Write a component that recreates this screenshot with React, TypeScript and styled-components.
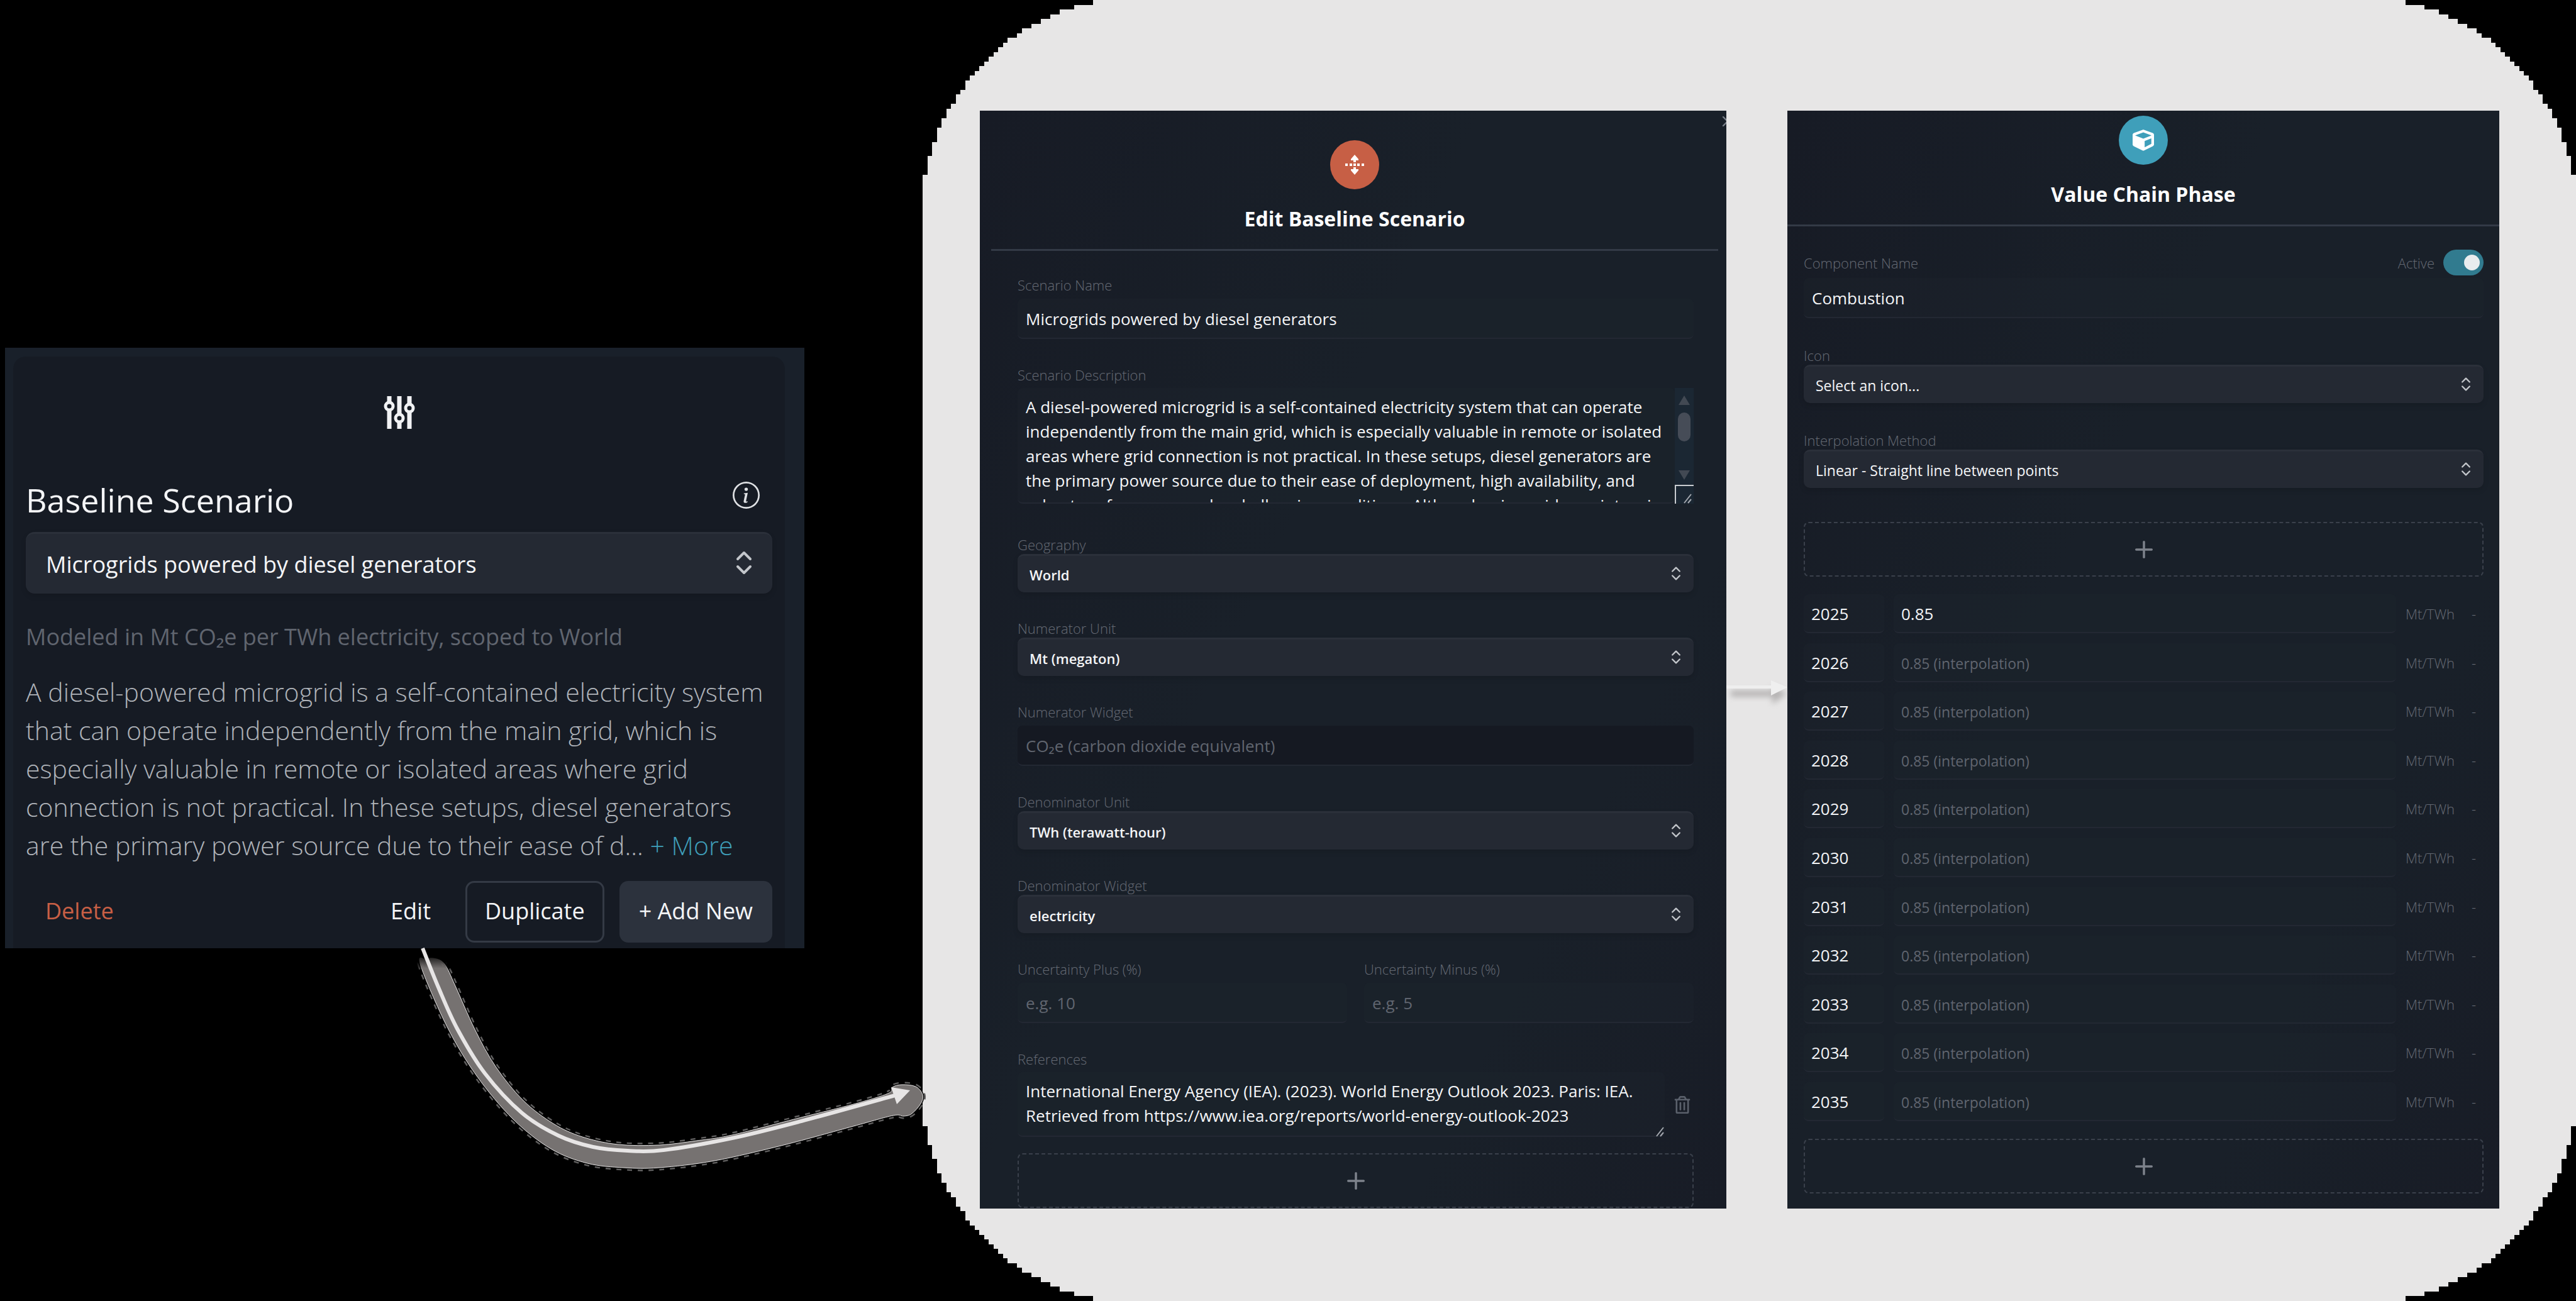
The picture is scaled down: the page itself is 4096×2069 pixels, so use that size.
import React from 'react';
import styled, { createGlobalStyle, css } from 'styled-components';
import { ChevronsUpDown, Plus, X } from 'lucide-react';
import { FaCube, FaRegTrashAlt } from 'react-icons/fa';
import { BsInfoCircle } from 'react-icons/bs';

const colors = {
  backdrop: '#000000',
  stage: '#e7e6e6',
  card: '#19202a',
  cardInner: '#161b24',
  select: '#242933',
  selectEdge: '#2b303a',
  line: '#232833',
  divider: '#333a46',
  text: '#f4f5f7',
  soft: '#afb3b9',
  muted: '#60656f',
  label: '#656a74',
  teal: '#3f9fba',
  orange: '#c75f45',
};

const GlobalStyle = createGlobalStyle`
  *, *::before, *::after { box-sizing: border-box; }
  body {
    margin: 0;
    background: ${colors.backdrop};
    color: ${colors.text};
    font-family: "Open Sans", "Noto Sans", sans-serif;
    font-size: 26px;
  }
  h1, h2, p, ul { margin: 0; padding: 0; }
  ul { list-style: none; }
  button, input, select, textarea { font: inherit; color: inherit; }
  button { background: none; border: 0; padding: 0; cursor: pointer; }
`;

/* The light stage has stair-stepped corners: each entry is the column at which a row of steps begins. */
const STEP = 752;
const cornerColumns = [
  36, 32, 29, 27, 25, 23, 21, 20, 18, 17, 16, 15, 14, 13, 12, 11, 10, 9, 9, 8, 7, 7, 6, 5, 5, 4, 4, 3,
  3, 3, 2, 2, 2, 1, 1, 1, 1, 0,
];
const unit = (n: number) => Math.round((n * STEP) / 100);

function steppedCorners() {
  const steps: [number, number][] = [];
  cornerColumns.forEach((column, row) => {
    steps.push([unit(column), unit(row)]);
    if (row < cornerColumns.length - 1) steps.push([unit(column), unit(row + 1)]);
  });
  const back = [...steps].reverse();
  const points = [
    ...back.map(([x, y]) => `${x}px ${y}px`),
    ...steps.map(([x, y]) => `calc(100% - ${x}px) ${y}px`),
    ...back.map(([x, y]) => `calc(100% - ${x}px) calc(100% - ${y}px)`),
    ...steps.map(([x, y]) => `${x}px calc(100% - ${y}px)`),
  ];
  return `polygon(${points.join(', ')})`;
}

const Page = styled.main`
  position: relative;
  display: grid;
  grid-template-columns: 1271fr 2629fr;
  column-gap: 188px;
  min-height: 100vh;
  padding-left: 8px;
`;

const Aside = styled.section`
  display: flex;
  align-items: center;
  padding-bottom: 8px;
`;

const Card = styled.div`
  flex: 1;
  min-width: 0;
  padding: 14px 31px 0 13px;
  background: ${colors.card};
`;

const CardInner = styled.div`
  display: flex;
  flex-direction: column;
  padding: 63px 20px 9px;
  border-radius: 20px 20px 0 0;
  background: ${colors.cardInner};
`;

const SlidersIcon = styled.svg`
  align-self: center;
  width: 50px;
  height: 52px;
`;

const CardHeader = styled.header`
  display: flex;
  justify-content: space-between;
  align-items: flex-start;
  margin: 78px 0 16px;
`;

const CardTitle = styled.h1`
  font-size: 52px;
  line-height: 70px;
  font-weight: 400;
`;

const InfoButton = styled.button`
  display: flex;
  margin: 6px 20px 0 0;
  font-size: 43px;
  color: #dfe1e4;
`;

const Scope = styled.p`
  margin-top: 42px;
  font-size: 36px;
  line-height: 54px;
  color: ${colors.muted};
`;

const Summary = styled.p`
  margin: 30px 0 26px;
  font-size: 41px;
  line-height: 61px;
  font-weight: 300;
  color: ${colors.soft};
`;

const MoreLink = styled.a`
  color: ${colors.teal};
  text-decoration: none;
`;

const Actions = styled.div`
  display: flex;
  gap: 24px;
`;

type ActionKind = 'danger' | 'plain' | 'outline' | 'solid';
const actionLook = {
  danger: css`
    margin-right: auto;
    color: ${colors.orange};
  `,
  plain: css``,
  outline: css`
    border: 3px solid #343a45;
  `,
  solid: css`
    background: #2c323d;
  `,
};
const Action = styled.button<{ $kind: ActionKind }>`
  height: 98px;
  padding: 0 28px 4px;
  border: 3px solid transparent;
  border-radius: 14px;
  font-size: 36px;
  ${(p) => actionLook[p.$kind]}
`;

const Stage = styled.section`
  display: grid;
  grid-template-columns: 1187fr 1132fr;
  column-gap: 97px;
  padding: 176px 122px 147px 91px;
  background: ${colors.stage};
  clip-path: ${steppedCorners()};
`;

const Panel = styled.article`
  position: relative;
  display: flex;
  flex-direction: column;
  min-width: 0;
  overflow: hidden;
  background: linear-gradient(115deg, #171b25 0%, #192029 40%, #192029 75%, #181c26 100%);
`;

const PanelHeader = styled.header<{ $top: number; $inset: boolean }>`
  display: flex;
  flex-direction: column;
  align-items: center;
  gap: 23px;
  margin: ${(p) => (p.$inset ? '0 13px 0 18px' : '0')};
  padding: ${(p) => p.$top}px 0 24px;
  border-bottom: 3px solid ${colors.divider};
`;

const Badge = styled.div<{ $color: string }>`
  display: flex;
  align-items: center;
  justify-content: center;
  width: 78px;
  height: 78px;
  border-radius: 50%;
  background: ${(p) => p.$color};
  font-size: 34px;
`;

const SplitIcon = styled.svg`
  width: 34px;
  height: 34px;
  fill: #ffffff;
`;

const PanelTitle = styled.h2`
  font-size: 32px;
  line-height: 48px;
  font-weight: 700;
  color: #ffffff;
`;

const CloseButton = styled.button`
  position: absolute;
  top: 3px;
  right: -16px;
  color: #7a808a;
`;

const ScenarioForm = styled.form`
  display: flex;
  flex-direction: column;
  gap: 42px;
  padding: 39px 52px 0 60px;
`;

const PhaseForm = styled.form`
  display: flex;
  flex: 1;
  flex-direction: column;
  gap: 44px;
  padding: 36px 25px 24px 26px;
`;

const FieldBox = styled.div`
  display: flex;
  flex-direction: column;
  flex: 1;
  min-width: 0;
`;

const Label = styled.label`
  font-size: 22px;
  line-height: 30px;
  font-weight: 300;
  color: ${colors.label};
`;

const SelectWrap = styled.div<{ $large?: boolean; $bold?: boolean }>`
  position: relative;
  display: flex;
  height: ${(p) => (p.$large ? 98 : 61)}px;
  font-size: ${(p) => (p.$large ? 36 : p.$bold ? 22 : 23)}px;
  font-weight: ${(p) => (p.$bold ? 600 : 400)};
  svg {
    position: absolute;
    top: 50%;
    right: ${(p) => (p.$large ? 21 : 14)}px;
    transform: translateY(-50%);
    color: #c3c6cb;
    pointer-events: none;
  }
`;

const Select = styled.select<{ $large?: boolean }>`
  appearance: none;
  width: 100%;
  padding: 1px ${(p) => (p.$large ? 32 : 19)}px 0;
  border: 0;
  border-top: 3px solid ${colors.selectEdge};
  border-radius: ${(p) => (p.$large ? 14 : 10)}px;
  background: ${colors.select};
  box-shadow: 0 4px 8px rgba(0, 0, 0, 0.12);
`;

const inputLook = css`
  width: 100%;
  min-width: 0;
  border: 0;
  border-bottom: 2px solid ${colors.line};
  border-radius: 8px;
  background: rgba(30, 38, 46, 0.25);
  outline: 0;
  &::placeholder {
    color: ${colors.muted};
    opacity: 1;
  }
`;

const Input = styled.input<{ $dark?: boolean }>`
  ${inputLook}
  height: 64px;
  margin-top: 7px;
  padding: 2px 13px 0;
  ${(p) =>
    p.$dark &&
    css`
      background: #151922;
    `}
`;

const TextArea = styled.textarea<{ $height: number }>`
  ${inputLook}
  height: ${(p) => p.$height}px;
  padding: 11px 4px 0 13px;
  line-height: 39px;
  resize: none;
  overflow: hidden;
`;

const AreaRow = styled.div`
  position: relative;
  display: flex;
  align-items: center;
  margin-top: 6px;
`;

const DescriptionField = styled(FieldBox)`
  padding-bottom: 8px;
`;

const ScrollTrack = styled.div`
  display: flex;
  flex: none;
  flex-direction: column;
  align-items: center;
  align-self: stretch;
  width: 30px;
  background: #1b2733;
`;

const ScrollArrow = styled.span<{ $down?: boolean }>`
  width: 18px;
  height: 15px;
  margin: ${(p) => (p.$down ? 'auto 0 8px' : '12px 0')};
  background: #424953;
  clip-path: ${(p) => (p.$down ? 'polygon(0 0, 100% 0, 50% 100%)' : 'polygon(50% 0, 100% 100%, 0 100%)')};
`;

const ScrollThumb = styled.span`
  width: 20px;
  height: 46px;
  border-radius: 10px;
  background: #464c57;
`;

const ResizeCorner = styled.span`
  display: flex;
  width: 30px;
  height: 30px;
  padding: 10px 2px 0 8px;
  border-top: 2px solid #c9ccd0;
  border-left: 2px solid #c9ccd0;
`;

const GripIcon = styled.svg`
  width: 18px;
  height: 18px;
  fill: none;
  stroke: #a5a9b0;
  stroke-width: 2;
`;

const CornerGrip = styled.span`
  position: absolute;
  right: 46px;
  bottom: 0;
  display: flex;
`;

const TrashButton = styled.button`
  display: flex;
  flex: none;
  justify-content: flex-end;
  width: 46px;
  padding-right: 4px;
  font-size: 28px;
  color: #5a606b;
`;

const Pair = styled.div`
  display: flex;
  gap: 27px;
`;

const ReferenceGroup = styled.div`
  display: flex;
  flex-direction: column;
  gap: 26px;
`;

const AddButton = styled.button`
  display: flex;
  flex: none;
  align-items: center;
  justify-content: center;
  width: 100%;
  height: 87px;
  border: 2px dashed #3a404b;
  border-radius: 8px;
  color: #7d828b;
`;

const LabelRow = styled.div`
  display: flex;
  align-items: center;
  gap: 14px;
  height: 43px;
  label:first-child {
    margin-right: auto;
  }
`;

const Toggle = styled.input`
  appearance: none;
  display: flex;
  align-items: center;
  justify-content: flex-end;
  width: 64px;
  height: 41px;
  margin: 0;
  padding: 0 6px;
  border-radius: 21px;
  background: #317b8f;
  &::before {
    content: '';
    width: 25px;
    height: 25px;
    border-radius: 50%;
    background: #e9ecee;
  }
`;

const NameField = styled(FieldBox)`
  flex: none;
  input[type='text'] {
    margin-top: 3px;
  }
`;

const PlainField = styled(FieldBox)`
  flex: none;
`;

const Timeline = styled.div`
  display: flex;
  flex: 1;
  flex-direction: column;
  gap: 28px;
  padding-top: 10px;
`;

const YearList = styled.ul`
  display: flex;
  flex: 1;
  flex-direction: column;
  justify-content: space-between;
`;

const YearRow = styled.li`
  display: grid;
  grid-template-columns: 128px 1fr 80px 44px;
  column-gap: 15px;
  align-items: center;
  margin-right: -15px;
`;

const YearInput = styled.input`
  ${inputLook}
  height: 62px;
  padding: 2px 12px 0;
`;

const ValueInput = styled(YearInput)`
  &::placeholder {
    font-size: 23px;
  }
`;

const UnitText = styled.span`
  font-size: 22px;
  line-height: 30px;
  font-weight: 300;
  color: ${colors.label};
`;

const DashText = styled(UnitText)`
  padding-left: 10px;
`;

const Connectors = styled.svg`
  position: absolute;
  inset: 0;
  width: 100%;
  height: 100%;
  pointer-events: none;
`;

type Point = [number, number];

/* Smooth curve through the points, as cubic segments. */
function curve(points: Point[], closed = false) {
  const n = points.length;
  const at = (i: number) => (closed ? points[(i + n) % n] : points[Math.max(0, Math.min(n - 1, i))]);
  let d = `M${points[0][0]} ${points[0][1]}`;
  for (let i = 0; i < (closed ? n : n - 1); i += 1) {
    const [a, b, c, e] = [at(i - 1), at(i), at(i + 1), at(i + 2)];
    d += ` C${b[0] + (c[0] - a[0]) / 6} ${b[1] + (c[1] - a[1]) / 6} ${c[0] - (e[0] - b[0]) / 6} ${
      c[1] - (e[1] - b[1]) / 6
    } ${c[0]} ${c[1]}`;
  }
  return closed ? `${d}Z` : d;
}

const swoosh: Point[] = [
  [672, 1508], [697, 1570], [727, 1636], [771, 1707], [830, 1770], [888, 1806], [943, 1824], [998, 1830],
  [1055, 1829], [1164, 1810], [1274, 1783], [1423, 1742],
];
const band: Point[] = [
  [668, 1533], [711, 1633], [758, 1711], [816, 1780], [876, 1827], [934, 1850], [992, 1857], [1048, 1857],
  [1136, 1846], [1246, 1821], [1357, 1791], [1420, 1774], [1437, 1775], [1450, 1771], [1464, 1755],
  [1467, 1741], [1456, 1728], [1434, 1725], [1419, 1729], [1412, 1739], [1357, 1756], [1274, 1777],
  [1164, 1805], [1108, 1814], [1048, 1821], [982, 1820], [926, 1808], [880, 1787], [832, 1750],
  [788, 1696], [755, 1637], [724, 1568], [707, 1533], [692, 1524], [678, 1525],
];

function ConnectorLayer() {
  return (
    <Connectors viewBox="0 0 4096 2069" preserveAspectRatio="none" aria-hidden="true">
      <defs>
        <linearGradient id="bandFill" gradientUnits="userSpaceOnUse" x1="0" y1="1516" x2="0" y2="1540">
          <stop offset="0" stopColor="#767271" stopOpacity="0" />
          <stop offset="1" stopColor="#767271" />
        </linearGradient>
        <linearGradient id="bandEdge" gradientUnits="userSpaceOnUse" x1="0" y1="1530" x2="0" y2="1544">
          <stop offset="0" stopColor="#e4e2e2" stopOpacity="0" />
          <stop offset="1" stopColor="#e4e2e2" />
        </linearGradient>
        <linearGradient id="bandFringe" gradientUnits="userSpaceOnUse" x1="0" y1="1530" x2="0" y2="1544">
          <stop offset="0" stopColor="#5f5e5e" stopOpacity="0" />
          <stop offset="1" stopColor="#5f5e5e" />
        </linearGradient>
        <filter id="soft" x="-20%" y="-200%" width="140%" height="500%">
          <feGaussianBlur stdDeviation="5" />
        </filter>
      </defs>
      <path d={curve(band, true)} fill="none" stroke="url(#bandFringe)" strokeWidth="9" strokeDasharray="8 9" />
      <path d={curve(band, true)} fill="none" stroke="#000000" strokeWidth="4" />
      <path d={curve(band, true)} fill="url(#bandFill)" stroke="url(#bandEdge)" strokeWidth="1" />
      <path d={curve(swoosh)} fill="none" stroke="#e7e5e5" strokeWidth="6" />
      <path d="M1417 1729L1447 1734L1426 1756Z" fill="#e7e5e5" />
      <g filter="url(#soft)" fill="#9b9999" opacity="0.65">
        <path d="M2752 1098H2818V1090L2841 1103L2818 1120V1108H2752Z" />
      </g>
      <path d="M2745 1090H2816V1082L2842 1093L2816 1106V1095H2745Z" fill="#efefef" />
    </Connectors>
  );
}

interface PickerProps {
  id: string;
  value: string;
  large?: boolean;
  bold?: boolean;
}
function Picker({ id, value, large, bold }: PickerProps) {
  return (
    <SelectWrap $large={large} $bold={bold}>
      <Select id={id} $large={large} defaultValue={value} aria-label={large ? 'Baseline scenario' : undefined}>
        <option>{value}</option>
      </Select>
      <ChevronsUpDown size={large ? 48 : 28} strokeWidth={2} />
    </SelectWrap>
  );
}

function PickerField({ id, label, value, bold }: PickerProps & { label: string }) {
  return (
    <PlainField>
      <Label htmlFor={id}>{label}</Label>
      <Picker id={id} value={value} bold={bold} />
    </PlainField>
  );
}

function Grip() {
  return (
    <GripIcon viewBox="0 0 18 18">
      <path d="M5 17L16 3M11 17L16 11" />
    </GripIcon>
  );
}

function BaselineCard() {
  return (
    <Card>
      <CardInner>
        <SlidersIcon viewBox="0 0 50 52" fill="#161b24" stroke="#f1f2f4" strokeWidth="7">
          <path d="M9 0V52M25 0V52M41 0V52" />
          <g strokeWidth="5">
            <circle cx="9" cy="16" r="6" />
            <circle cx="25" cy="35" r="6" />
            <circle cx="41" cy="19" r="6" />
          </g>
        </SlidersIcon>
        <CardHeader>
          <CardTitle>Baseline Scenario</CardTitle>
          <InfoButton type="button" aria-label="About baseline scenarios">
            <BsInfoCircle />
          </InfoButton>
        </CardHeader>
        <Picker id="baseline" value="Microgrids powered by diesel generators" large />
        <Scope>Modeled in Mt CO₂e per TWh electricity, scoped to World</Scope>
        <Summary>
          A diesel-powered microgrid is a self-contained electricity system that can operate independently from the
          main grid, which is especially valuable in remote or isolated areas where grid connection is not practical.
          In these setups, diesel generators are the primary power source due to their ease of d...{' '}
          <MoreLink href="#more">+ More</MoreLink>
        </Summary>
        <Actions>
          <Action type="button" $kind="danger">Delete</Action>
          <Action type="button" $kind="plain">Edit</Action>
          <Action type="button" $kind="outline">Duplicate</Action>
          <Action type="button" $kind="solid">+ Add New</Action>
        </Actions>
      </CardInner>
    </Card>
  );
}

const description =
  'A diesel-powered microgrid is a self-contained electricity system that can operate independently from the main grid, which is especially valuable in remote or isolated areas where grid connection is not practical. In these setups, diesel generators are the primary power source due to their ease of deployment, high availability, and robust performance under challenging conditions. Although microgrids are intensive';

function ScenarioPanel() {
  return (
    <Panel>
      <CloseButton type="button" aria-label="Close">
        <X size={28} strokeWidth={2} />
      </CloseButton>
      <PanelHeader $top={47} $inset>
        <Badge $color={colors.orange}>
          <SplitIcon viewBox="0 0 34 34">
            <path d="M17 1L23 8V10H19V13H15V10H11V8ZM17 33L23 26V24H19V21H15V24H11V26Z" />
            <path d="M2 15h4v4h-4zM9 15h4v4h-4zM15 15h4v4h-4zM21 15h4v4h-4zM28 15h4v4h-4z" />
          </SplitIcon>
        </Badge>
        <PanelTitle>Edit Baseline Scenario</PanelTitle>
      </PanelHeader>
      <ScenarioForm>
        <PlainField>
          <Label htmlFor="name">Scenario Name</Label>
          <Input id="name" defaultValue="Microgrids powered by diesel generators" />
        </PlainField>
        <DescriptionField>
          <Label htmlFor="description">Scenario Description</Label>
          <AreaRow>
            <TextArea id="description" $height={184} defaultValue={description} />
            <ScrollTrack>
              <ScrollArrow />
              <ScrollThumb />
              <ScrollArrow $down />
              <ResizeCorner>
                <Grip />
              </ResizeCorner>
            </ScrollTrack>
          </AreaRow>
        </DescriptionField>
        <PickerField id="geography" label="Geography" value="World" bold />
        <PickerField id="numUnit" label="Numerator Unit" value="Mt (megaton)" bold />
        <PlainField>
          <Label htmlFor="numWidget">Numerator Widget</Label>
          <Input id="numWidget" placeholder="CO₂e (carbon dioxide equivalent)" $dark />
        </PlainField>
        <PickerField id="denUnit" label="Denominator Unit" value="TWh (terawatt-hour)" bold />
        <PickerField id="denWidget" label="Denominator Widget" value="electricity" bold />
        <Pair>
          <FieldBox>
            <Label htmlFor="plus">Uncertainty Plus (%)</Label>
            <Input id="plus" placeholder="e.g. 10" />
          </FieldBox>
          <FieldBox>
            <Label htmlFor="minus">Uncertainty Minus (%)</Label>
            <Input id="minus" placeholder="e.g. 5" />
          </FieldBox>
        </Pair>
        <ReferenceGroup>
          <PlainField>
            <Label htmlFor="reference">References</Label>
            <AreaRow>
              <TextArea
                id="reference"
                $height={103}
                defaultValue="International Energy Agency (IEA). (2023). World Energy Outlook 2023. Paris: IEA. Retrieved from https://www.iea.org/reports/world-energy-outlook-2023"
              />
              <CornerGrip>
                <Grip />
              </CornerGrip>
              <TrashButton type="button" aria-label="Remove reference">
                <FaRegTrashAlt />
              </TrashButton>
            </AreaRow>
          </PlainField>
          <AddButton type="button" aria-label="Add reference">
            <Plus size={42} strokeWidth={2} />
          </AddButton>
        </ReferenceGroup>
      </ScenarioForm>
    </Panel>
  );
}

const years = Array.from({ length: 11 }, (_, i) => 2025 + i);

function PhasePanel() {
  return (
    <Panel>
      <PanelHeader $top={8} $inset={false}>
        <Badge $color={colors.teal}>
          <FaCube color="#ffffff" />
        </Badge>
        <PanelTitle>Value Chain Phase</PanelTitle>
      </PanelHeader>
      <PhaseForm>
        <NameField>
          <LabelRow>
            <Label htmlFor="component">Component Name</Label>
            <Label htmlFor="active">Active</Label>
            <Toggle id="active" type="checkbox" role="switch" defaultChecked />
          </LabelRow>
          <Input id="component" type="text" defaultValue="Combustion" />
        </NameField>
        <PickerField id="icon" label="Icon" value="Select an icon..." />
        <PickerField id="method" label="Interpolation Method" value="Linear - Straight line between points" />
        <Timeline>
          <AddButton type="button" aria-label="Add earlier year">
            <Plus size={42} strokeWidth={2} />
          </AddButton>
          <YearList>
            {years.map((year) => (
              <YearRow key={year}>
                <YearInput aria-label="Year" defaultValue={year} />
                <ValueInput
                  aria-label={`Value for ${year}`}
                  defaultValue={year === 2025 ? '0.85' : ''}
                  placeholder="0.85 (interpolation)"
                />
                <UnitText>Mt/TWh</UnitText>
                <DashText>-</DashText>
              </YearRow>
            ))}
          </YearList>
          <AddButton type="button" aria-label="Add later year">
            <Plus size={42} strokeWidth={2} />
          </AddButton>
        </Timeline>
      </PhaseForm>
    </Panel>
  );
}

export default function App() {
  return (
    <>
      <GlobalStyle />
      <Page>
        <Aside>
          <BaselineCard />
        </Aside>
        <Stage>
          <ScenarioPanel />
          <PhasePanel />
        </Stage>
        <ConnectorLayer />
      </Page>
    </>
  );
}
